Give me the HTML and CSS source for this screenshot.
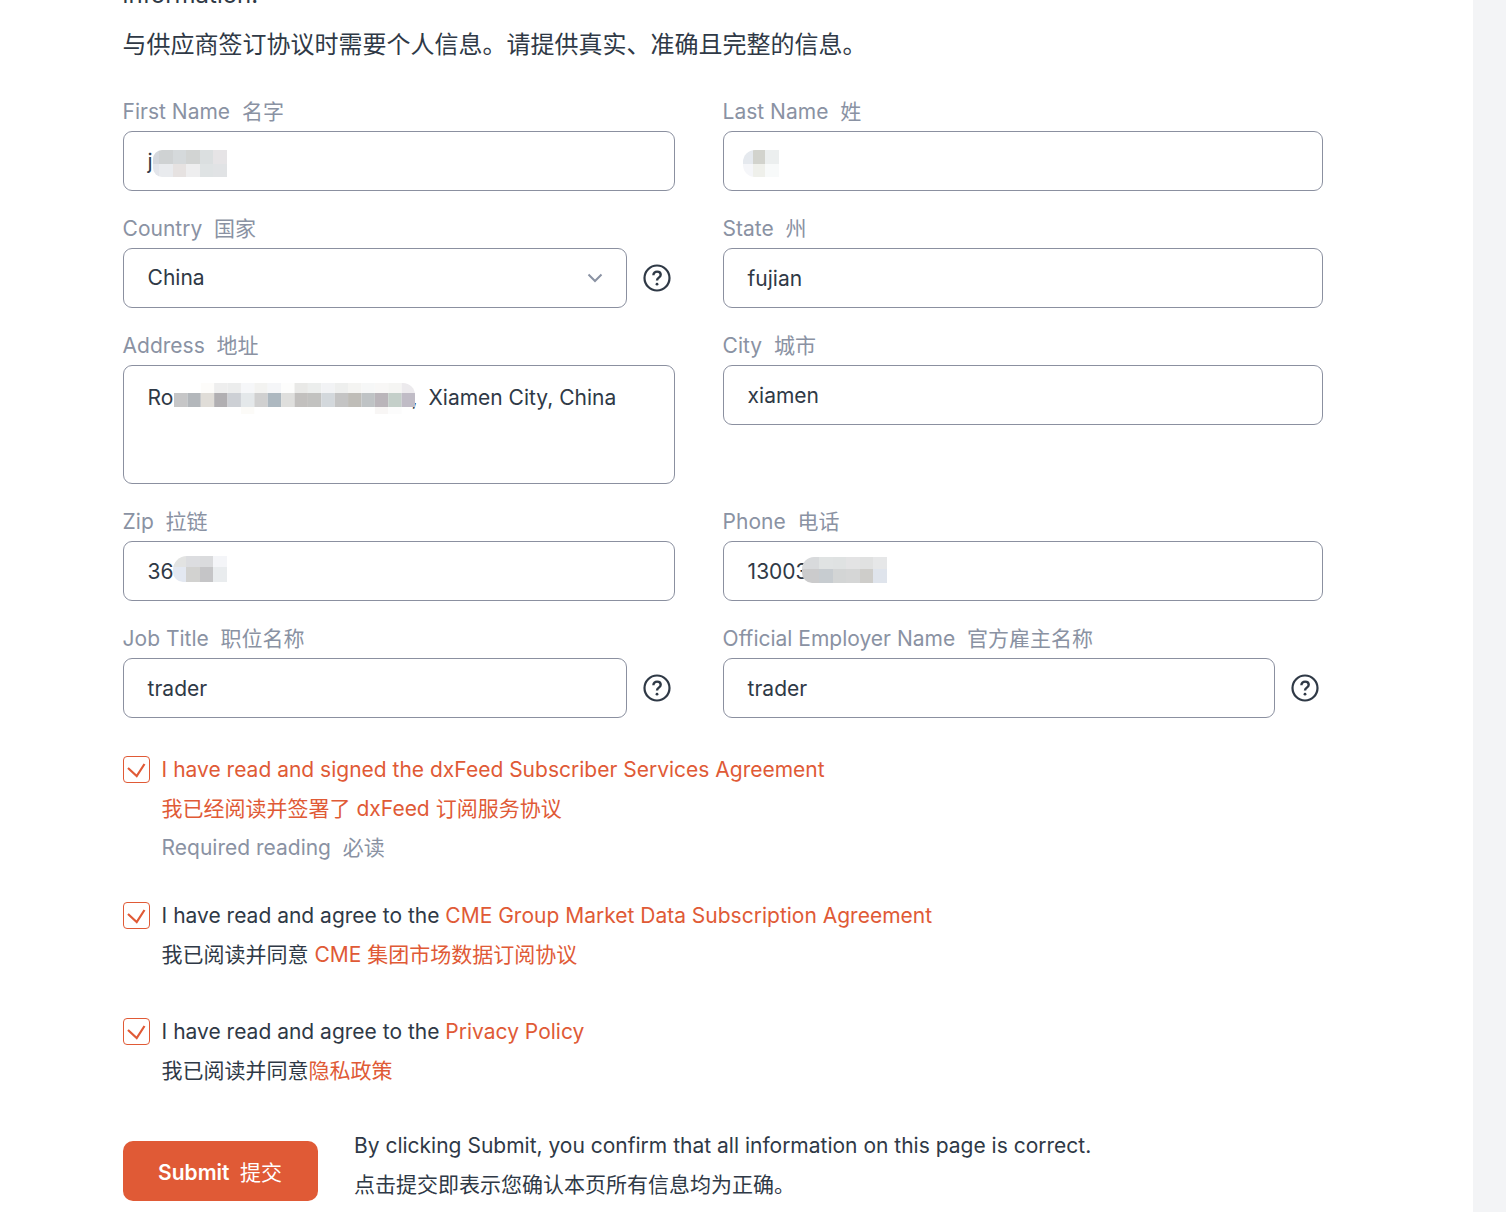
FILE: index.html
```html
<!DOCTYPE html>
<html lang="zh">
<head>
<meta charset="utf-8">
<title>Subscriber form</title>
<link rel="stylesheet" href="styles.css">
</head>
<body>
<div class="page">
  <main class="main">
    <p class="intro intro-en">information.</p>
    <p class="intro">与供应商签订协议时需要个人信息。请提供真实、准确且完整的信息。</p>
    <form class="form">
      <div class="field"><label class="label">First Name&nbsp; 名字</label><div class="control"><div class="input">j<svg class="mosaic m-first" viewBox="3 0 74 27"><g shape-rendering="crispEdges"><rect width="9" height="14" fill="#d4d7dc"/><rect x="9" width="14" height="14" fill="#cfd2d3"/><rect x="23" width="13" height="14" fill="#d5d9db"/><rect x="36" width="14" height="14" fill="#d2d4d3"/><rect x="50" width="13" height="14" fill="#dbdfe0"/><rect x="63" width="14" height="14" fill="#e6e4e6"/><rect y="14" width="9" height="13" fill="#e3e5ea"/><rect x="9" y="14" width="14" height="13" fill="#e9ebee"/><rect x="23" y="14" width="13" height="13" fill="#e6e2e1"/><rect x="36" y="14" width="14" height="13" fill="#eeeeef"/><rect x="50" y="14" width="13" height="13" fill="#dfe3e4"/><rect x="63" y="14" width="14" height="13" fill="#e1e3e5"/></g></svg></div></div></div>
      <div class="field"><label class="label">Last Name&nbsp; 姓</label><div class="control"><div class="input"><svg class="mosaic m-last" viewBox="0 0 36 27"><g shape-rendering="crispEdges"><rect width="10" height="14" fill="#e5e9ee"/><rect x="10" width="12" height="14" fill="#d2d3cd"/><rect x="22" width="14" height="14" fill="#ecefef"/><rect y="14" width="10" height="13" fill="#f5f6f9"/><rect x="10" y="14" width="12" height="13" fill="#eff0eb"/><rect x="22" y="14" width="14" height="13" fill="#f8fafa"/></g></svg></div></div></div>
      <div class="field"><label class="label">Country&nbsp; 国家</label><div class="control"><div class="input select">China<svg class="chev" viewBox="0 0 16 10"><path d="M1.5 1.5 8 8l6.5-6.5"/></svg></div><svg class="help" viewBox="0 0 28 28"><circle cx="14" cy="14" r="12.5"/><path class="qm" d="M10.4 11.2c0-2.2 1.6-3.6 3.7-3.6s3.6 1.3 3.6 3.2c0 2.9-3.7 2.8-3.7 5.6"/><circle class="dot" cx="14" cy="20.2" r="1.4"/></svg></div></div>
      <div class="field"><label class="label">State&nbsp; 州</label><div class="control"><div class="input">fujian</div></div></div>
      <div class="field"><label class="label">Address&nbsp; 地址</label><div class="control"><div class="input area">Ro<span class="gap"></span>,<span class="addr-rest">Xiamen City, China</span><svg class="mosaic m-addr" viewBox="0 0 18 31" preserveAspectRatio="none"><g>
        <rect x="2" width="1" height="10" fill="#fdfcfa"/><rect x="3" width="1" height="10" fill="#eeeeee"/><rect x="4" width="1" height="10" fill="#eceded"/><rect x="5" width="1" height="10" fill="#f6f7f9"/><rect x="6" width="1" height="10" fill="#f3f3f1"/><rect x="7" width="1" height="10" fill="#f5f6f8"/><rect x="8" width="1" height="10" fill="#fdfdfc"/><rect x="9" width="1" height="10" fill="#e9e9e7"/><rect x="10" width="1" height="10" fill="#eceeed"/><rect x="11" width="1" height="10" fill="#f2f3f5"/><rect x="12" width="1" height="10" fill="#eeefee"/><rect x="13" width="1" height="10" fill="#f4f4f2"/><rect x="14" width="1" height="10" fill="#f6f7f7"/><rect x="15" width="1" height="10" fill="#f8f7f6"/><rect x="16" width="1" height="10" fill="#f5f5f3"/><rect x="17" width="1" height="10" fill="#eceaed"/>
        <rect y="10" width="1" height="14" fill="#c6c6c7"/><rect x="1" y="10" width="1" height="14" fill="#b3b7bb"/><rect x="2" y="10" width="1" height="14" fill="#e0ddd8"/><rect x="3" y="10" width="1" height="14" fill="#b1afb2"/><rect x="4" y="10" width="1" height="14" fill="#cdd0d5"/><rect x="5" y="10" width="1" height="14" fill="#e4e8ea"/><rect x="6" y="10" width="1" height="14" fill="#d0d0d0"/><rect x="7" y="10" width="1" height="14" fill="#adb8c0"/><rect x="8" y="10" width="1" height="14" fill="#dfdfdd"/><rect x="9" y="10" width="1" height="14" fill="#c2c0be"/><rect x="10" y="10" width="1" height="14" fill="#c2c2c0"/><rect x="11" y="10" width="1" height="14" fill="#d3d8dc"/><rect x="12" y="10" width="1" height="14" fill="#c4c4c4"/><rect x="13" y="10" width="1" height="14" fill="#bfbdb8"/><rect x="14" y="10" width="1" height="14" fill="#bfc3c5"/><rect x="15" y="10" width="1" height="14" fill="#bab5ba"/><rect x="16" y="10" width="1" height="14" fill="#c4cfc9"/><rect x="17" y="10" width="1" height="14" fill="#c0bcc6"/>
        <rect x="5" y="24" width="1" height="7" fill="#fcfbf8"/><rect x="15" y="24" width="1" height="7" fill="#f8f6f5"/><rect x="16" y="24" width="1" height="7" fill="#fcfcfc"/></g></svg></div></div></div>
      <div class="field"><label class="label">City&nbsp; 城市</label><div class="control"><div class="input">xiamen</div></div></div>
      <div class="field"><label class="label">Zip&nbsp; 拉链</label><div class="control"><div class="input">36<svg class="mosaic m-zip" viewBox="0 0 54 26"><g shape-rendering="crispEdges"><rect width="13" height="11" fill="#e2e3e2"/><rect x="13" width="14" height="11" fill="#dcdde0"/><rect x="27" width="13" height="11" fill="#dadbdd"/><rect x="40" width="14" height="11" fill="#f4f5f8"/><rect y="11" width="13" height="15" fill="#e3e8f1"/><rect x="13" y="11" width="14" height="15" fill="#d2d2d0"/><rect x="27" y="11" width="13" height="15" fill="#c5c5c7"/><rect x="40" y="11" width="14" height="15" fill="#e9ecee"/></g></svg></div></div></div>
      <div class="field"><label class="label">Phone&nbsp; 电话</label><div class="control"><div class="input">13003<svg class="mosaic m-phone" viewBox="0 0 85 26"><g shape-rendering="crispEdges"><rect width="17" height="12" fill="#d8dadc"/><rect x="17" width="14" height="12" fill="#e0e3e3"/><rect x="31" width="13" height="12" fill="#dfe2e2"/><rect x="44" width="14" height="12" fill="#e3e3e4"/><rect x="58" width="13" height="12" fill="#e0e1e1"/><rect x="71" width="14" height="12" fill="#e6e7e8"/><rect y="12" width="17" height="14" fill="#cbcbcc"/><rect x="17" y="12" width="14" height="14" fill="#c7ccd0"/><rect x="31" y="12" width="13" height="14" fill="#d3d5d5"/><rect x="44" y="12" width="14" height="14" fill="#d5d6d6"/><rect x="58" y="12" width="13" height="14" fill="#cecdca"/><rect x="71" y="12" width="14" height="14" fill="#dfe4ec"/></g></svg></div></div></div>
      <div class="field"><label class="label">Job Title&nbsp; 职位名称</label><div class="control"><div class="input">trader</div><svg class="help" viewBox="0 0 28 28"><circle cx="14" cy="14" r="12.5"/><path class="qm" d="M10.4 11.2c0-2.2 1.6-3.6 3.7-3.6s3.6 1.3 3.6 3.2c0 2.9-3.7 2.8-3.7 5.6"/><circle class="dot" cx="14" cy="20.2" r="1.4"/></svg></div></div>
      <div class="field"><label class="label">Official Employer Name&nbsp; 官方雇主名称</label><div class="control"><div class="input">trader</div><svg class="help" viewBox="0 0 28 28"><circle cx="14" cy="14" r="12.5"/><path class="qm" d="M10.4 11.2c0-2.2 1.6-3.6 3.7-3.6s3.6 1.3 3.6 3.2c0 2.9-3.7 2.8-3.7 5.6"/><circle class="dot" cx="14" cy="20.2" r="1.4"/></svg></div></div>
    </form>
    <section class="agreements">
      <div class="check check-first">
        <span class="box"><svg viewBox="0 0 25 25"><path d="M4 11l8.7 8L20.5 7"/></svg></span>
        <div class="check-text">
          <p class="accent">I have read and signed the dxFeed Subscriber Services Agreement</p>
          <p class="accent">我已经阅读并签署了 dxFeed 订阅服务协议</p>
          <p class="muted">Required reading&nbsp; 必读</p>
        </div>
      </div>
      <div class="check check-second">
        <span class="box"><svg viewBox="0 0 25 25"><path d="M4 11l8.7 8L20.5 7"/></svg></span>
        <div class="check-text">
          <p>I have read and agree to the <a class="accent">CME Group Market Data Subscription Agreement</a></p>
          <p>我已阅读并同意 <a class="accent">CME 集团市场数据订阅协议</a></p>
        </div>
      </div>
      <div class="check check-third">
        <span class="box"><svg viewBox="0 0 25 25"><path d="M4 11l8.7 8L20.5 7"/></svg></span>
        <div class="check-text">
          <p>I have read and agree to the <a class="accent">Privacy Policy</a></p>
          <p>我已阅读并同意<a class="accent">隐私政策</a></p>
        </div>
      </div>
    </section>
    <div class="submit-row">
      <button class="submit" type="button">Submit&nbsp; <span class="submit-cn">提交</span></button>
      <div class="submit-note">
        <p>By clicking Submit, you confirm that all information on this page is correct.</p>
        <p>点击提交即表示您确认本页所有信息均为正确。</p>
      </div>
    </div>
  </main>
  <aside class="rail"></aside>
</div>
</body>
</html>
```
FILE: styles.css
```css
* { box-sizing: border-box; }
html, body { margin: 0; height: 1212px; overflow: hidden; background: #fff; }
body { font-family: Inter, "Noto Sans CJK SC", sans-serif; font-size: 21px; color: #2f3946; }
p { margin: 0; }
.page { display: flex; height: 1212px; overflow: hidden; }
.main { width: 1473px; flex: none; padding: 0 0 0 122.6px; margin-top: -23px; }
.rail { flex: 1; background: #f3f4f6; }
.intro { font-size: 24px; line-height: 36px; height: 36px; }
.intro-en { height: 50px; line-height: 36px; }
.form { display: grid; grid-template-columns: 552px 600px; column-gap: 48px; row-gap: 25px; width: 1200px; margin-top: 36px; }
.label { display: block; height: 24px; line-height: 26px; margin-bottom: 8px; color: #8a92a3; white-space: nowrap; }
.control { display: flex; align-items: center; }
.input { position: relative; flex: 1; min-width: 0; height: 60px; line-height: 60px; padding: 0 24px; border: 1px solid #8b90a0; border-radius: 9px; background: #fff; }
.select { display: flex; justify-content: space-between; align-items: center; }
.chev { width: 16px; height: 10px; margin-right: -1px; fill: none; stroke: #8a92a3; stroke-width: 2; }
.help { flex: none; width: 28px; height: 28px; margin: 0 4px 0 16px; fill: none; stroke: #2f3946; stroke-width: 2.2; }
.help .qm { stroke-width: 2.4; }
.help .dot { fill: #2f3946; stroke: none; }
.area { height: 119px; line-height: 30px; padding-top: 17px; }
.gap { display: inline-block; width: 238px; }
.addr-rest { margin-left: 11px; }
.mosaic { position: absolute; display: block; }
.m-first { left: 29.4px; top: 18px; width: 74px; height: 27px; border-radius: 9px 0 0 9px; }
.m-last { left: 19.4px; top: 18px; width: 36px; height: 27px; border-radius: 12px 0 0 12px; }
.m-addr { left: 50.4px; top: 17px; width: 241px; height: 31px; border-radius: 0 12px 0 0; }
.m-zip { left: 49.4px; top: 14px; width: 54px; height: 26px; border-radius: 14px 0 0 10px; }
.m-phone { left: 78.4px; top: 15px; width: 85px; height: 26px; border-radius: 12px 0 0 10px; }
.agreements { margin-top: 32px; }
.check { display: flex; gap: 12px; }
.check-first { height: 146px; }
.check-second { height: 116px; }
.check-third { height: 114px; }
.check-text p { line-height: 39px; height: 39px; white-space: nowrap; }
.box { flex: none; width: 27px; height: 27px; margin-top: 6px; border: 1px solid #e05a36; border-radius: 4px; }
.box svg { display: block; width: 25px; height: 25px; fill: none; stroke: #e05a36; stroke-width: 2.2; }
.accent { color: #e05a36; }
.muted { color: #8a92a3; }
.submit-row { display: flex; gap: 36.4px; }
.submit { width: 195px; height: 60px; margin-top: 15px; border: 0; border-radius: 10px; background: #e05a36; color: #fff; font: 600 21px Inter, "Noto Sans CJK SC", sans-serif; }
.submit-cn { font-weight: 400; }
.submit-note p { line-height: 39px; white-space: nowrap; }
```
